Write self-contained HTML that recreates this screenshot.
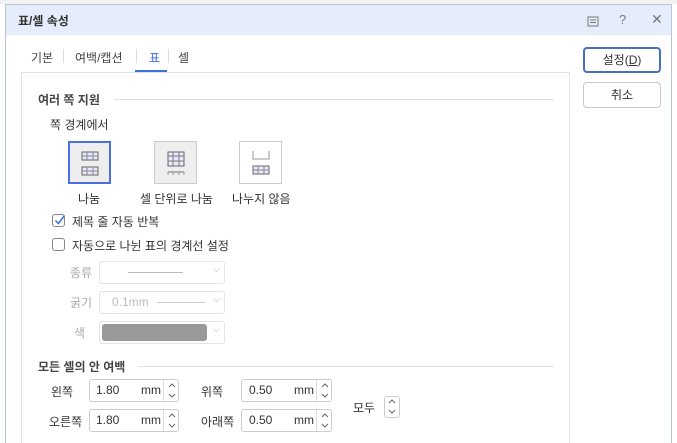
<!DOCTYPE html>
<html><head><meta charset="utf-8"><style>
*{margin:0;padding:0;box-sizing:border-box}
body{width:677px;height:443px;overflow:hidden;background:#fff;font-family:"Liberation Sans","Noto Sans CJK KR",sans-serif;font-size:12px;color:#333;position:relative}
.a{position:absolute}
#dlg{left:5px;top:4px;width:667px;height:439px;background:#fff;border-left:1px solid #b8c4d8;border-right:1px solid #b8c4d8;border-top:1px solid #b8c4d8;overflow:hidden}
#title{left:0;top:0;width:665px;height:30px;background:#e5edfb}
.tab{top:48px;font-size:12px;color:#444}
.sep{top:48px;width:1px;height:14px;background:#ddd}
.btn{width:78px;height:26px;border:1px solid #c8c8c8;border-radius:4px;text-align:center;line-height:24px;background:#fff}
.icon{width:43px;height:43px;border:1px solid #ccc;background:#eee}
.in{height:23px;border:1px solid #ccc;border-radius:3px;background:#fff}
.g{color:#aaa}
.lbl{font-size:12px}
.chk{width:13px;height:13px;border:1px solid #888;border-radius:3px;background:#fff}
</style></head><body>
<div class="a" style="left:0;top:0;width:677px;height:4px;background:#f2f2f2"></div>
<div class="a" id="dlg">
 <div class="a" id="title"></div>
 <div class="a" style="left:12px;top:7px;font-size:12px;font-weight:bold;color:#333">표/셀 속성</div>
 <svg class="a" style="left:581px;top:11px" width="12" height="12"><rect x="1" y="1" width="10" height="9" fill="none" stroke="#777"/><path d="M3 4h6M3 6.5h6" stroke="#777"/></svg>
 <div class="a" style="left:613px;top:7px;color:#777;font-size:13px">?</div>
 <div class="a" style="left:645px;top:6px;color:#777;font-size:14px">✕</div>
 <div class="a btn" style="left:577px;top:42px;border:2px solid #4a6fbf;line-height:22px">설정(<u>D</u>)</div>
 <div class="a btn" style="left:577px;top:77px">취소</div>
<div class="a" style="left:0;top:-4px;width:667px;height:447px">
 <div class="a tab" style="left:25px">기본</div>
 <div class="a sep" style="left:57px"></div>
 <div class="a tab" style="left:69px">여백/캡션</div>
 <div class="a sep" style="left:130px"></div>
 <div class="a tab" style="left:143px;color:#3d6fd8">표</div>
 <div class="a sep" style="left:162px"></div>
 <div class="a tab" style="left:172px">셀</div>
 <div class="a" style="left:129px;top:69px;width:32px;height:2px;background:#3d6fd8"></div>
 <div class="a" style="left:15px;top:71px;width:549px;height:380px;border:1px solid #e2e2e2;border-bottom:none"></div>

 <div class="a lbl" style="left:32px;top:90px;font-weight:bold;color:#444">여러 쪽 지원</div>
 <div class="a" style="left:108px;top:98px;width:440px;height:1px;background:#e0e0e0"></div>
 <div class="a lbl" style="left:44px;top:115px">쪽 경계에서</div>
 <div class="a icon" style="left:62px;top:140px;border:2px solid #4a6fe0"></div>
 <svg class="a" style="left:75px;top:150px" width="18" height="26"><g fill="#e8e8ff" stroke="#666"><rect x="1" y="1" width="16" height="8"/><rect x="1" y="16" width="16" height="8"/></g><path d="M6 1v8M12 1v8M1 5h16M6 16v8M12 16v8M1 20h16" stroke="#888"/></svg>
 <div class="a icon" style="left:148px;top:140px"></div>
 <svg class="a" style="left:161px;top:150px" width="18" height="26"><rect x="1" y="1" width="16" height="14" fill="#e8e8ff" stroke="#666"/><path d="M6 1v14M12 1v14M1 5h16M1 10h16M1 21h16" stroke="#777"/><path d="M1 21v3M17 21v3M6 21v3M12 21v3" stroke="#999"/></svg>
 <div class="a icon" style="left:233px;top:140px;background:#fff"></div>
 <svg class="a" style="left:246px;top:150px" width="18" height="26"><path d="M1 0v8h16V0" fill="none" stroke="#999"/><rect x="1" y="15" width="16" height="8" fill="#e8e8ff" stroke="#666"/><path d="M6 15v8M12 15v8M1 19h16" stroke="#888"/></svg>
 <div class="a lbl" style="left:72px;top:189px">나눔</div>
 <div class="a lbl" style="left:134px;top:189px">셀 단위로 나눔</div>
 <div class="a lbl" style="left:226px;top:189px">나누지 않음</div>

 <div class="a chk" style="left:46px;top:213px"></div>
 <svg class="a" style="left:47px;top:212px" width="14" height="14"><path d="M2.5 7.5l3 3 6-8" fill="none" stroke="#3d6fd8" stroke-width="1.5"/></svg>
 <div class="a lbl" style="left:66px;top:212px">제목 줄 자동 반복</div>
 <div class="a chk" style="left:46px;top:237px"></div>
 <div class="a lbl" style="left:66px;top:236px">자동으로 나뉜 표의 경계선 설정</div>

 <div class="a lbl g" style="left:64px;top:263px">종류</div>
 <div class="a in" style="left:93px;top:260px;width:126px;border-color:#e4e4e4"></div>
 <div class="a" style="left:122px;top:271px;width:55px;height:1px;background:#bbb"></div>
 <div class="a g" style="left:207px;top:263px;font-size:9px">⌵</div>
 <div class="a lbl g" style="left:64px;top:293px">굵기</div>
 <div class="a in" style="left:93px;top:290px;width:126px;border-color:#e4e4e4"></div>
 <div class="a g" style="left:106px;top:294px;color:#bbb">0.1mm</div>
 <div class="a" style="left:151px;top:301px;width:48px;height:1px;background:#ccc"></div>
 <div class="a g" style="left:207px;top:293px;font-size:9px">⌵</div>
 <div class="a lbl g" style="left:68px;top:323px">색</div>
 <div class="a in" style="left:93px;top:320px;width:126px;border-color:#e4e4e4"></div>
 <div class="a" style="left:96px;top:323px;width:105px;height:17px;background:#999;border-radius:3px"></div>
 <div class="a g" style="left:207px;top:323px;font-size:9px">⌵</div>

 <div class="a lbl" style="left:32px;top:357px;font-weight:bold;color:#444">모든 셀의 안 여백</div>
 <div class="a" style="left:132px;top:365px;width:416px;height:1px;background:#e0e0e0"></div>

 <div class="a lbl" style="left:45px;top:382px">왼쪽</div>
 <div class="a in" style="left:83px;top:378px;width:90px"></div>
 <div class="a" style="left:90px;top:382px">1.80</div><div class="a" style="left:135px;top:382px">mm</div>
 <div class="a lbl" style="left:43px;top:412px">오른쪽</div>
 <div class="a in" style="left:83px;top:408px;width:90px"></div>
 <div class="a" style="left:90px;top:412px">1.80</div><div class="a" style="left:135px;top:412px">mm</div>
 <div class="a lbl" style="left:195px;top:382px">위쪽</div>
 <div class="a in" style="left:235px;top:378px;width:91px"></div>
 <div class="a" style="left:243px;top:382px">0.50</div><div class="a" style="left:288px;top:382px">mm</div>
 <div class="a lbl" style="left:195px;top:412px">아래쪽</div>
 <div class="a in" style="left:235px;top:408px;width:91px"></div>
 <div class="a" style="left:243px;top:412px">0.50</div><div class="a" style="left:288px;top:412px">mm</div>
 <div class="a" style="left:157px;top:379px;width:1px;height:21px;background:#ddd"></div>
 <div class="a" style="left:157px;top:409px;width:1px;height:21px;background:#ddd"></div>
 <div class="a" style="left:310px;top:379px;width:1px;height:21px;background:#ddd"></div>
 <div class="a" style="left:310px;top:409px;width:1px;height:21px;background:#ddd"></div>
 <svg class="a" style="left:159px;top:379px" width="14" height="52"><g fill="none" stroke="#666"><path d="M4 7l3-3 3 3M4 14l3 3 3-3M4 37l3-3 3 3M4 44l3 3 3-3"/></g></svg>
 <svg class="a" style="left:312px;top:379px" width="14" height="52"><g fill="none" stroke="#666"><path d="M4 7l3-3 3 3M4 14l3 3 3-3M4 37l3-3 3 3M4 44l3 3 3-3"/></g></svg>
 <div class="a lbl" style="left:347px;top:398px">모두</div>
 <div class="a in" style="left:378px;top:395px;width:16px;height:22px;border-color:#ccc"></div>
 <svg class="a" style="left:380px;top:396px" width="12" height="20"><g fill="none" stroke="#666"><path d="M3 6l3-3 3 3M3 13l3 3 3-3"/></g></svg>
</div>
</div>
</body></html>
